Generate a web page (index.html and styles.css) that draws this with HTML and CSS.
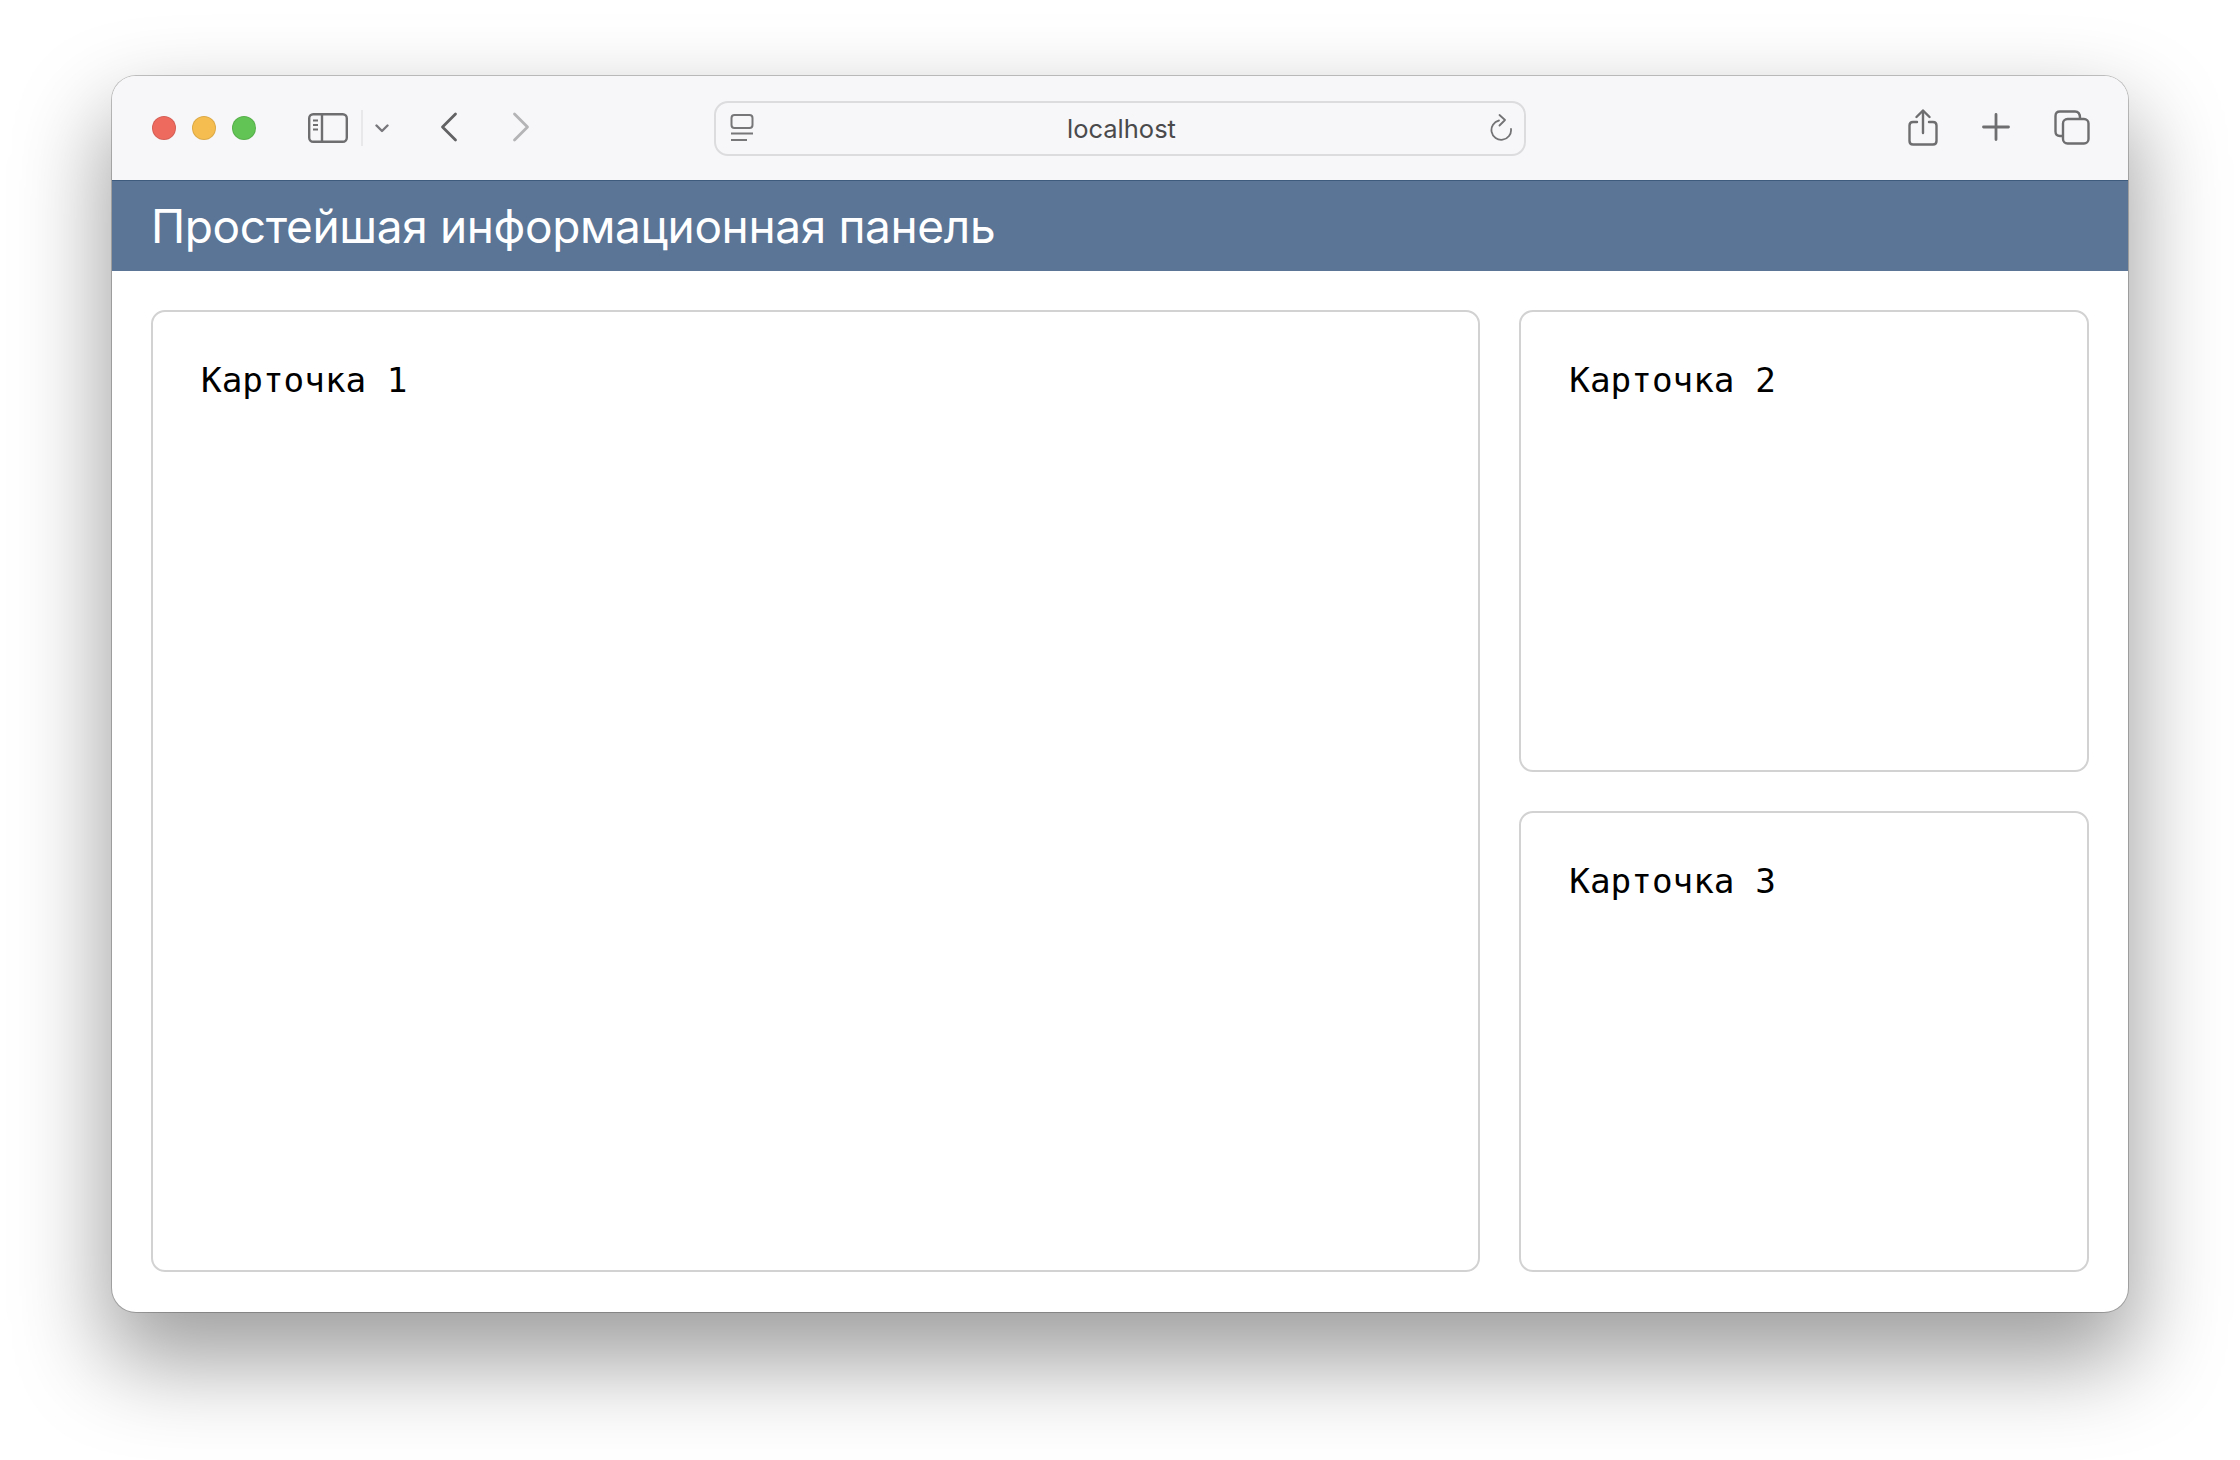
FILE: index.html
```html
<!DOCTYPE html>
<html lang="ru">
<head>
<meta charset="utf-8">
<title>localhost</title>
<link rel="stylesheet" href="styles.css">
</head>
<body>
<div class="window">
  <div class="toolbar">
    <div class="lights">
      <span class="light red"></span>
      <span class="light yellow"></span>
      <span class="light green"></span>
    </div>
    <svg class="ico-sidebar" width="40" height="30" viewBox="0 0 40 30" fill="none" stroke="#6e6e70" stroke-width="2.4">
      <rect x="1.2" y="1.2" width="37.6" height="27.6" rx="4"/>
      <path d="M14 1.2V28.800"/>
      <path d="M5 7.500H10M5 12H10M5 16.500H10" stroke-width="1.800"/>
    </svg>
    <span class="divider"></span>
    <svg class="ico-chevron" width="14" height="9" viewBox="0 0 14 9" fill="none" stroke="#77777c" stroke-width="2.400" stroke-linecap="round" stroke-linejoin="round">
      <path d="M1.500 1.500L7 7L12.500 1.500"/>
    </svg>
    <svg class="ico-back" width="18" height="30" viewBox="0 0 18 30" fill="none" stroke="#626265" stroke-width="2.800" stroke-linecap="round" stroke-linejoin="round">
      <path d="M15.500 2L2.500 15L15.500 28"/>
    </svg>
    <svg class="ico-forward" width="18" height="30" viewBox="0 0 18 30" fill="none" stroke="#b4b4b6" stroke-width="2.800" stroke-linecap="round" stroke-linejoin="round">
      <path d="M2.500 2L15.500 15L2.500 28"/>
    </svg>
    <div class="address">
      <svg class="ico-page" width="24" height="28" viewBox="0 0 24 28" fill="none" stroke="#77777a" stroke-width="2">
        <rect x="1.500" y="1" width="21" height="13" rx="3"/>
        <path d="M1 19.500H23"/>
        <path d="M1 26H17"/>
      </svg>
      <span class="url">localhost</span>
      <svg class="ico-reload" width="23" height="28" viewBox="0 0 23 28" fill="none" stroke="#737376" stroke-width="1.800" stroke-linecap="round" stroke-linejoin="round">
        <path d="M9 6.500A9.800 9.800 0 1 0 21 15"/>
        <path d="M9.500 1L15 6L9.500 11.500"/>
      </svg>
    </div>
    <svg class="ico-share" width="30" height="37" viewBox="0 0 30 37" fill="none" stroke="#6e6e70" stroke-width="2.400" stroke-linecap="round" stroke-linejoin="round">
      <path d="M9 13H5Q1.500 13 1.500 16.500V32Q1.500 35.500 5 35.500H25Q28.500 35.500 28.500 32V16.500Q28.500 13 25 13H21"/>
      <path d="M15 24V2"/>
      <path d="M8.500 8L15 1.500L21.500 8"/>
    </svg>
    <svg class="ico-plus" width="28" height="28" viewBox="0 0 28 28" fill="none" stroke="#6e6e70" stroke-width="2.800" stroke-linecap="round">
      <path d="M14 1.500V26.500M1.500 14H26.500"/>
    </svg>
    <svg class="ico-tabs" width="36" height="35" viewBox="0 0 36 35" fill="none" stroke="#6e6e70" stroke-width="2.400" stroke-linejoin="round">
      <path d="M8 26H6Q1.500 26 1.500 21.500V6Q1.500 1.500 6 1.500H21Q26 1.500 26 8"/>
      <rect x="9" y="9" width="25.500" height="24.500" rx="4.500"/>
    </svg>
  </div>
  <header class="banner">
    <h1 class="title">Простейшая информационная панель</h1>
  </header>
  <main class="board">
    <section class="card card-main">Карточка 1</section>
    <section class="card">Карточка 2</section>
    <section class="card">Карточка 3</section>
  </main>
</div>
</body>
</html>
```
FILE: styles.css
```css
* { box-sizing: border-box; }
html, body { margin: 0; }
body {
  background: #fff;
  padding: 76px 112px 148px;
  height: 1460px;
  overflow: hidden;
}
.window {
  width: 2016px;
  height: 1236px;
  display: flex;
  flex-direction: column;
  background: #fff;
  border-radius: 24px;
  overflow: hidden;
  box-shadow: 0 0 0 1px rgba(0, 0, 0, .22), 0 44px 90px 6px rgba(0, 0, 0, .38);
}
.toolbar {
  height: 104px;
  flex: none;
  display: flex;
  align-items: center;
  background: #f7f7f9;
  padding-left: 40px;
}
.lights { display: flex; gap: 16px; }
.light {
  width: 24px;
  height: 24px;
  border-radius: 50%;
  border: 1px solid rgba(0, 0, 0, .1);
}
.red { background: #ee6a5f; }
.yellow { background: #f5bd4f; }
.green { background: #61c454; }
.toolbar svg { flex: none; display: block; }
.ico-sidebar { margin-left: 52px; }
.divider {
  width: 2px;
  height: 36px;
  background: #e8e8ea;
  margin-left: 13px;
}
.ico-chevron { margin-left: 12px; }
.ico-back { margin-left: 51px; margin-top: -2px; }
.ico-forward { margin-left: 54px; margin-top: -2px; }
.address {
  width: 812px;
  height: 55px;
  margin-left: 183.500px;
  display: flex;
  align-items: center;
  justify-content: space-between;
  padding: 0 10px 0 14px;
  border: 2px solid #dcdcde;
  border-radius: 14px;
  background: #f7f7f9;
}
.url {
  font: 400 25.500px "Inter", "Liberation Sans", sans-serif;
  color: #4a4a4c;
  margin-left: -1px;
}
.ico-share { margin-left: 382px; margin-top: -2px; }
.ico-plus { margin-left: 44.500px; margin-top: -2px; }
.ico-tabs { margin-left: 44px; margin-top: -2px; }
.banner {
  height: 91px;
  flex: none;
  display: flex;
  align-items: center;
  padding: 0 39px;
  background: #5a7596;
  border-top: 1px solid #3e5a7c;
}
.title {
  margin: 0;
  font: 400 46px "Inter", "Liberation Sans", sans-serif;
  letter-spacing: -.37px;
  color: #fff;
}
.board {
  flex: 1;
  display: grid;
  grid-template-columns: 7fr 3fr;
  grid-template-rows: 1fr 1fr;
  gap: 39px;
  padding: 39px 39px 40px;
}
.card {
  border: 2px solid #d2d2d2;
  border-radius: 14px;
  padding: 48px 48px;
  font: 400 34.300px/1.200 "DejaVu Sans Mono", monospace;
  color: #000;
}
.card-main { grid-row: span 2; }
```
